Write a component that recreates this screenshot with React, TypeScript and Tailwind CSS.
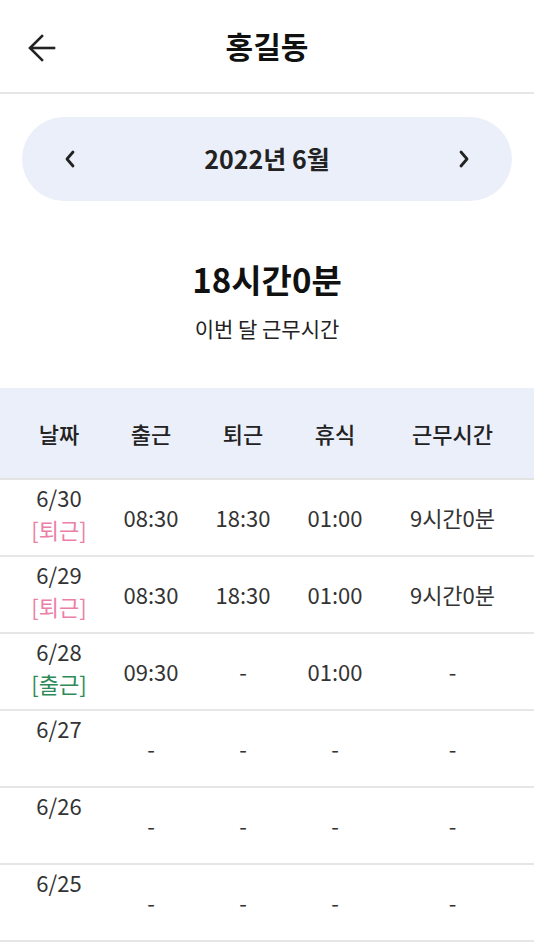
import React from 'react';

type Row = {
  date: string;
  tag?: 'in' | 'out';
  start: string;
  end: string;
  rest: string;
  total: string;
};

const rows: Row[] = [
  { date: '6/30', tag: 'out', start: '08:30', end: '18:30', rest: '01:00', total: '9시간0분' },
  { date: '6/29', tag: 'out', start: '08:30', end: '18:30', rest: '01:00', total: '9시간0분' },
  { date: '6/28', tag: 'in', start: '09:30', end: '-', rest: '01:00', total: '-' },
  { date: '6/27', start: '-', end: '-', rest: '-', total: '-' },
  { date: '6/26', start: '-', end: '-', rest: '-', total: '-' },
  { date: '6/25', start: '-', end: '-', rest: '-', total: '-' },
];

const font = { fontFamily: '"Noto Sans CJK KR", "Noto Sans", sans-serif' };

const App: React.FC = () => {
  return (
    <div className="w-[534px] h-[950px] overflow-hidden bg-white text-[#222]" style={font}>
      {/* Header */}
      <div className="relative h-[94px] flex items-center justify-center border-b-2 border-[#e6e6e6]">
        <button className="absolute left-[26px] top-[32px] w-[32px] h-[32px] flex items-center justify-center">
          <svg width="32" height="32" viewBox="0 0 32 32" fill="none" stroke="#222" strokeWidth="2.6" strokeLinecap="square">
            <path d="M5 16h23" />
            <path d="M16 4L4 16l12 12" />
          </svg>
        </button>
        <h1 className="text-[30px] font-bold text-[#111] leading-none -mt-[3px]">홍길동</h1>
      </div>

      {/* Month selector */}
      <div className="px-[22px] pt-[23px]">
        <div className="h-[84px] rounded-full bg-[#ebeffa] flex items-center justify-between px-[42px]">
          <svg width="12" height="18" viewBox="0 0 12 18" fill="none" stroke="#222" strokeWidth="2.8" strokeLinecap="round" strokeLinejoin="round">
            <path d="M9 2L3 9l6 7" />
          </svg>
          <span className="text-[25px] font-bold text-[#222] leading-none -mt-[2px]">2022년 6월</span>
          <svg width="12" height="18" viewBox="0 0 12 18" fill="none" stroke="#222" strokeWidth="2.8" strokeLinecap="round" strokeLinejoin="round">
            <path d="M3 2l6 7-6 7" />
          </svg>
        </div>
      </div>

      {/* Summary */}
      <div className="flex flex-col items-center pt-[58px] pb-[45px]">
        <span className="text-[33px] font-bold text-[#111] leading-[40px]">18시간0분</span>
        <span className="text-[21px] text-[#222] leading-[30px] mt-[14px]">이번 달 근무시간</span>
      </div>

      {/* Table header */}
      <div className="h-[92px] bg-[#ebeffa] border-b-2 border-[#e3e3e3] flex items-center pl-[13px] pr-[10px] text-[22px] font-medium text-[#222]">
        <div className="w-[92px] text-center">날짜</div>
        <div className="w-[92px] text-center">출근</div>
        <div className="w-[92px] text-center">퇴근</div>
        <div className="w-[92px] text-center">휴식</div>
        <div className="flex-1 text-center">근무시간</div>
      </div>

      {/* Rows */}
      {rows.map((r) => (
        <div key={r.date} className="h-[77px] border-b-2 border-[#e6e6e6] flex pl-[13px] pr-[10px] text-[22px] text-[#333]">
          <div className="w-[92px] flex flex-col items-center pt-[1px] leading-[32px]">
            <span>{r.date}</span>
            {r.tag === 'out' && <span className="text-[#ec7fa8]">[퇴근]</span>}
            {r.tag === 'in' && <span className="text-[#2e8b57]">[출근]</span>}
          </div>
          <div className="w-[92px] flex items-center justify-center">{r.start}</div>
          <div className="w-[92px] flex items-center justify-center">{r.end}</div>
          <div className="w-[92px] flex items-center justify-center">{r.rest}</div>
          <div className="flex-1 flex items-center justify-center">{r.total}</div>
        </div>
      ))}
    </div>
  );
};

export default App;
